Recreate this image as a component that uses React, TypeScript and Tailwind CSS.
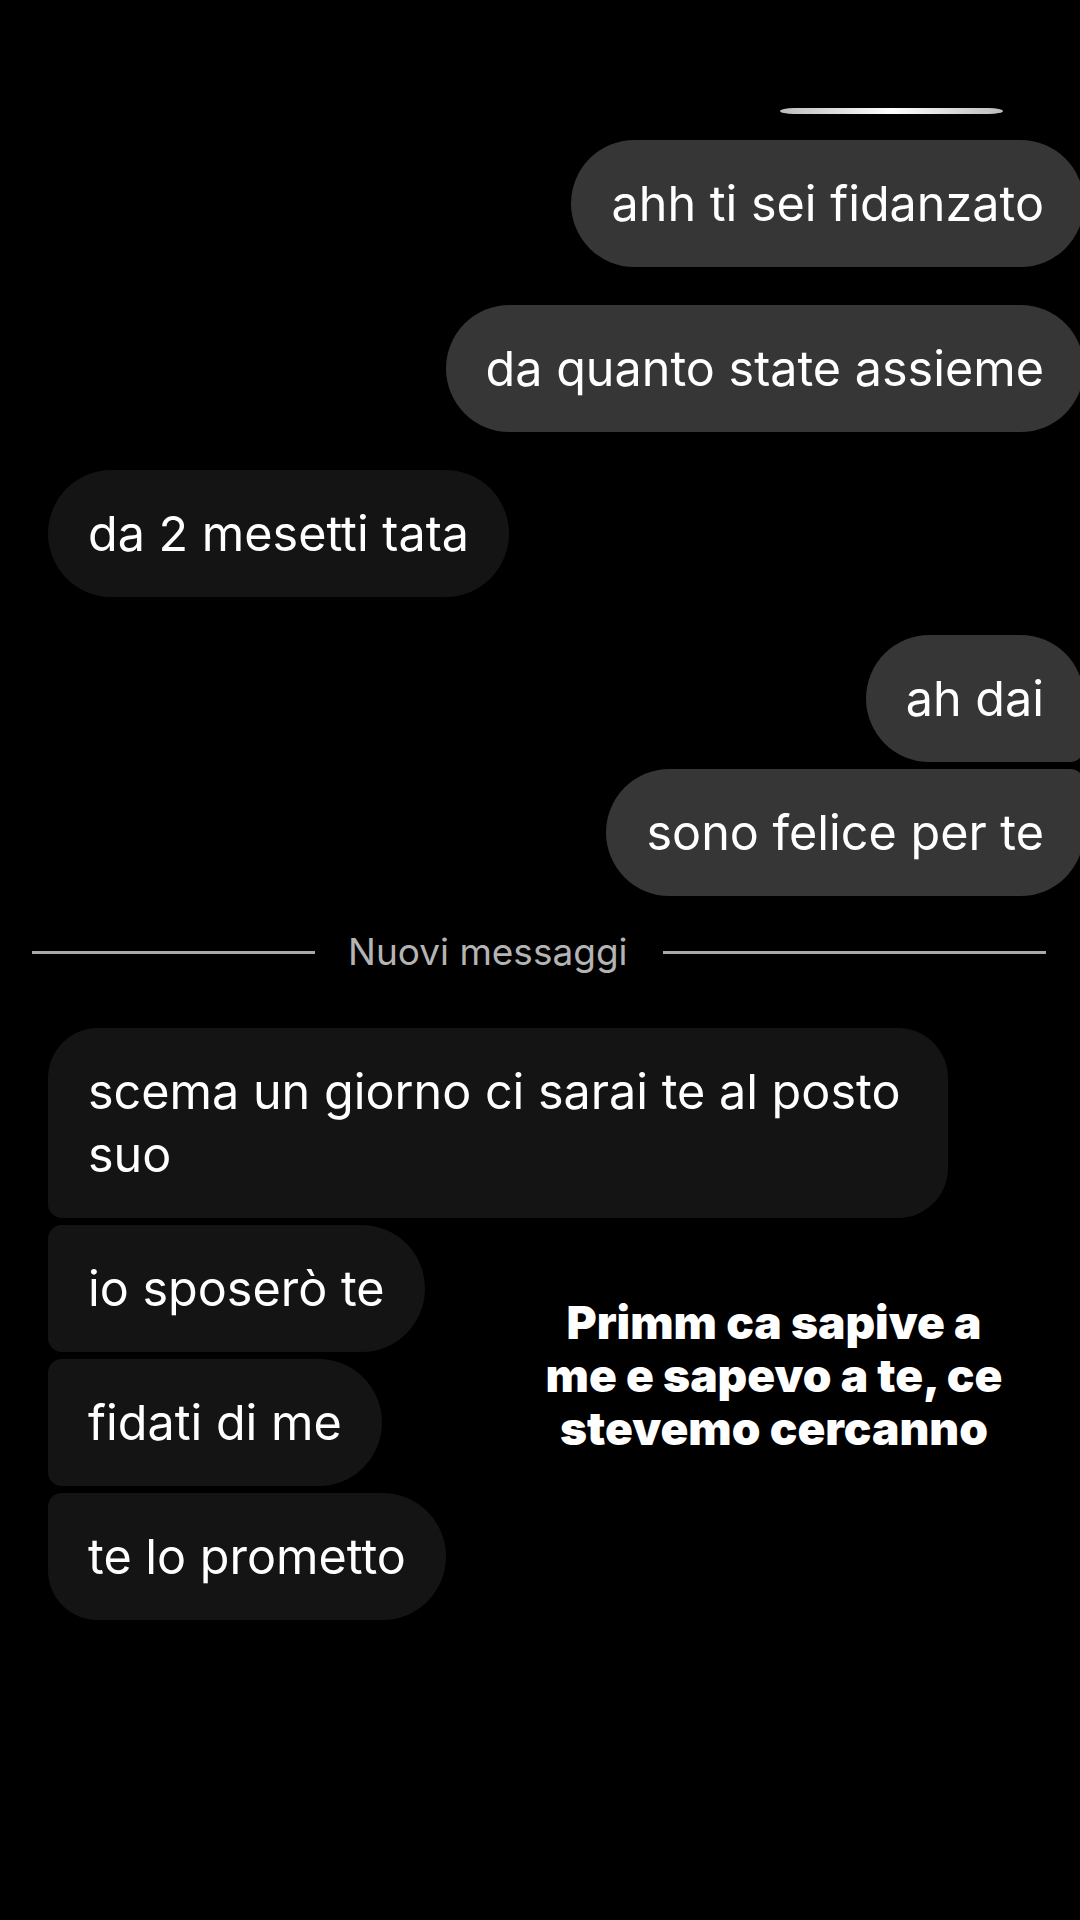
import type { ReactNode } from 'react';

const font = { fontFamily: 'Inter, "Noto Sans", sans-serif' };

function Bubble({ children, className }: { children: ReactNode; className: string }) {
  return (
    <div className={`px-10 py-8 text-[48.5px] leading-[63px] text-white whitespace-nowrap ${className}`}>
      {children}
    </div>
  );
}

function Sent({ children, className = 'rounded-[64px]', mt }: { children: ReactNode; className?: string; mt: string }) {
  return (
    <div className={`flex justify-end -mr-1 ${mt}`}>
      <Bubble className={`bg-[#363636] ${className}`}>{children}</Bubble>
    </div>
  );
}

function Received({ children, className = 'rounded-[64px]', mt }: { children: ReactNode; className?: string; mt: string }) {
  return (
    <div className={`flex justify-start pl-[48px] ${mt}`}>
      <Bubble className={`bg-[#141414] ${className}`}>{children}</Bubble>
    </div>
  );
}

export default function App() {
  return (
    <div className="relative h-[1920px] w-[1080px] overflow-hidden bg-black" style={font}>
      {/* status highlight */}
      <div className="flex justify-end pt-[108px] pr-[77px]">
        <div className="h-[6px] w-[223px] rounded-[14px_/_3px] bg-gradient-to-r from-[#bdbdbd] via-white to-[#bdbdbd]" />
      </div>

      <Sent mt="mt-[26px]">ahh ti sei fidanzato</Sent>
      <Sent mt="mt-[38px]">da quanto state assieme</Sent>
      <Received mt="mt-[38px]">da 2 mesetti tata</Received>
      <Sent mt="mt-[38px]" className="rounded-l-[64px] rounded-tr-[64px] rounded-br-[14px]">
        ah dai
      </Sent>
      <Sent mt="mt-[7px]" className="rounded-l-[64px] rounded-tr-[14px] rounded-br-[64px]">
        sono felice per te
      </Sent>

      <div className="mt-[32px] flex h-[48px] items-center pl-[32px]">
        <div className="h-[3px] w-[283px] bg-[#a9a9a9]" />
        <span className="ml-[33px] text-[37px] leading-[48px] text-[#b4b4b4]">Nuovi messaggi</span>
        <div className="ml-[35px] h-[3px] w-[383px] bg-[#a9a9a9]" />
      </div>

      <Received
        mt="mt-[52px]"
        className="w-[900px] rounded-tl-[50px] rounded-bl-[14px] rounded-r-[50px]"
      >
        scema un giorno ci sarai te al posto
        <br />
        suo
      </Received>
      <Received mt="mt-[7px]" className="rounded-l-[14px] rounded-r-[64px]">
        io sposerò te
      </Received>
      <Received mt="mt-[7px]" className="rounded-l-[14px] rounded-r-[64px]">
        fidati di me
      </Received>
      <Received mt="mt-[7px]" className="rounded-tl-[14px] rounded-bl-[50px] rounded-r-[64px]">
        te lo prometto
      </Received>

      {/* story text sticker */}
      <div className="absolute left-[520px] top-[1296px] w-[508px] text-center text-[46px] font-black leading-[53px] text-white">
        Primm ca sapive a
        <br />
        me e sapevo a te, ce
        <br />
        stevemo cercanno
      </div>
    </div>
  );
}
